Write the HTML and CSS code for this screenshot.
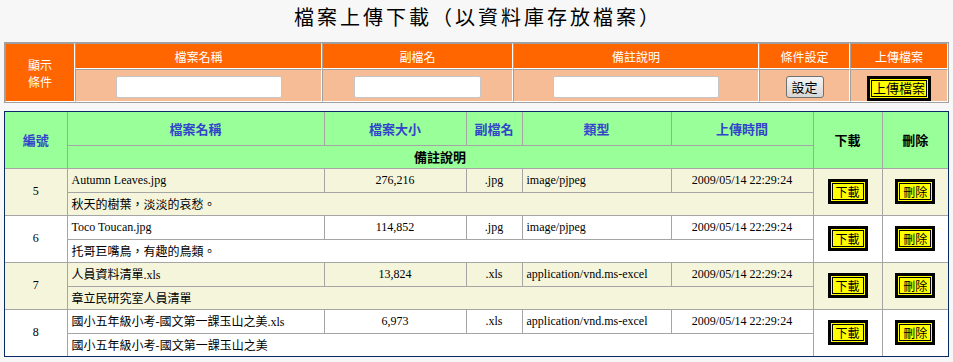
FILE: index.html
```html
<!DOCTYPE html>
<html>
<head>
    <meta charset="utf-8">
    <link rel="stylesheet" href="styles.css">
</head>

<body>
    <h1 class="pageTitle">檔案上傳下載（以資料庫存放檔案）</h1>

    <table class="filterTable">
        <colgroup>
            <col class="fc1">
            <col class="fc2">
            <col class="fc3">
            <col class="fc4">
            <col class="fc5">
            <col class="fc6">
        </colgroup>
        <tr>
            <th rowspan="2" class="showCond">顯示<br>條件</th>
            <th>檔案名稱</th>
            <th>副檔名</th>
            <th>備註說明</th>
            <th>條件設定</th>
            <th>上傳檔案</th>
        </tr>
        <tr>
            <td><input type="text" class="txtBox"></td>
            <td><input type="text" class="txtBox short"></td>
            <td><input type="text" class="txtBox"></td>
            <td><button type="button" class="setButton">設定</button></td>
            <td><button type="button" class="yellowButton wide">上傳檔案</button></td>
        </tr>
    </table>

    <div class="gridBox">
        <table class="fileGrid">
            <colgroup>
                <col class="gc1">
                <col class="gc2">
                <col class="gc3">
                <col class="gc4">
                <col class="gc5">
                <col class="gc6">
                <col class="gc7">
                <col class="gc8">
            </colgroup>
            <tr class="headRow1">
                <th rowspan="2" class="blue">編號</th>
                <th class="blue">檔案名稱</th>
                <th class="blue">檔案大小</th>
                <th class="blue">副檔名</th>
                <th class="blue">類型</th>
                <th class="blue">上傳時間</th>
                <th rowspan="2">下載</th>
                <th rowspan="2">刪除</th>
            </tr>
            <tr class="headRow2">
                <th colspan="5">備註說明</th>
            </tr>

            <tr class="fileRow odd">
                <td rowspan="2" class="center">5</td>
                <td class="left">Autumn Leaves.jpg</td>
                <td class="center">276,216</td>
                <td class="center">.jpg</td>
                <td class="left">image/pjpeg</td>
                <td class="center">2009/05/14 22:29:24</td>
                <td rowspan="2" class="center"><button type="button" class="yellowButton">下載</button></td>
                <td rowspan="2" class="center"><button type="button" class="yellowButton">刪除</button></td>
            </tr>
            <tr class="noteRow odd">
                <td colspan="5" class="left note">秋天的樹葉，淡淡的哀愁。</td>
            </tr>

            <tr class="fileRow">
                <td rowspan="2" class="center">6</td>
                <td class="left">Toco Toucan.jpg</td>
                <td class="center">114,852</td>
                <td class="center">.jpg</td>
                <td class="left">image/pjpeg</td>
                <td class="center">2009/05/14 22:29:24</td>
                <td rowspan="2" class="center"><button type="button" class="yellowButton">下載</button></td>
                <td rowspan="2" class="center"><button type="button" class="yellowButton">刪除</button></td>
            </tr>
            <tr class="noteRow">
                <td colspan="5" class="left note">托哥巨嘴鳥，有趣的鳥類。</td>
            </tr>

            <tr class="fileRow odd">
                <td rowspan="2" class="center">7</td>
                <td class="left">人員資料清單.xls</td>
                <td class="center">13,824</td>
                <td class="center">.xls</td>
                <td class="left">application/vnd.ms-excel</td>
                <td class="center">2009/05/14 22:29:24</td>
                <td rowspan="2" class="center"><button type="button" class="yellowButton">下載</button></td>
                <td rowspan="2" class="center"><button type="button" class="yellowButton">刪除</button></td>
            </tr>
            <tr class="noteRow odd">
                <td colspan="5" class="left note">章立民研究室人員清單</td>
            </tr>

            <tr class="fileRow">
                <td rowspan="2" class="center">8</td>
                <td class="left">國小五年級小考-國文第一課玉山之美.xls</td>
                <td class="center">6,973</td>
                <td class="center">.xls</td>
                <td class="left">application/vnd.ms-excel</td>
                <td class="center">2009/05/14 22:29:24</td>
                <td rowspan="2" class="center"><button type="button" class="yellowButton">下載</button></td>
                <td rowspan="2" class="center"><button type="button" class="yellowButton">刪除</button></td>
            </tr>
            <tr class="noteRow">
                <td colspan="5" class="left note">國小五年級小考-國文第一課玉山之美</td>
            </tr>
        </table>
    </div>
</body>
</html>
```

FILE: styles.css
```css
body {
    margin: 0 4px;
    background-color: #f7f7f7;
    font-family: "Noto Sans CJK TC", sans-serif;
}

.pageTitle {
    margin: 0 0 9px 0;
    padding-left: 3px;
    font-size: 20px;
    font-weight: normal;
    line-height: 33px;
    letter-spacing: 3px;
    text-align: center;
    color: #000;
}

/* query / upload bar */
.filterTable {
    width: 100%;
    table-layout: fixed;
    border-collapse: separate;
    border-spacing: 0;
    border: 1px solid #a0a0a0;
    margin-bottom: 8px;
}

.fc1 { width: 70px; }
.fc2 { width: 247px; }
.fc3 { width: 191px; }
.fc4 { width: 246px; }
.fc5 { width: 91px; }
.fc6 { width: 98px; }

.filterTable th,
.filterTable td {
    border: 1px solid;
    border-color: #a0a0a0 #ffffff #ffffff #a0a0a0;
    padding: 0;
    text-align: center;
}

.filterTable th {
    height: 24px;
    background-color: #ff6600;
    color: #ffffff;
    font-size: 12px;
    font-weight: normal;
}

.filterTable th.showCond {
    line-height: 17px;
}

.filterTable td {
    height: 31px;
    background-color: #f5bc96;
}

.txtBox {
    box-sizing: border-box;
    width: 166px;
    height: 22px;
    margin: 0;
    padding: 0 2px;
    border: 1px solid #c6c6c6;
    border-radius: 2px;
    background-color: #ffffff;
    vertical-align: middle;
}

.txtBox.short {
    width: 127px;
}

.setButton {
    box-sizing: border-box;
    width: 38px;
    height: 22px;
    padding: 0;
    border: 1px solid #707070;
    border-radius: 3px;
    background: linear-gradient(to bottom, #f4f4f4 0%, #e6e6e6 50%, #d6d6d6 100%);
    font-family: "Noto Sans CJK TC", sans-serif;
    font-size: 13px;
    line-height: 18px;
    color: #000;
    vertical-align: middle;
}

.yellowButton {
    box-sizing: border-box;
    width: 32px;
    height: 17px;
    padding: 0;
    border: 1px solid #000;
    box-shadow: 0 0 0 1px #ffff00, 0 0 0 4px #000;
    background-color: #ffff00;
    font-family: "Noto Sans CJK TC", sans-serif;
    font-size: 12px;
    line-height: 14px;
    color: #000;
    vertical-align: middle;
}

.yellowButton.wide {
    width: 56px;
    font-size: 13px;
}

/* file list */
.gridBox {
    border: 1px solid #0a2a66;
    background-color: #ffffff;
}

.fileGrid {
    width: 100%;
    table-layout: fixed;
    border-collapse: collapse;
    border-style: hidden;
    font-family: "Liberation Serif", "Noto Sans CJK TC", serif;
    font-size: 12px;
    color: #000;
}

.gc1 { width: 62px; }
.gc2 { width: 257px; }
.gc3 { width: 142px; }
.gc4 { width: 56px; }
.gc5 { width: 149px; }
.gc6 { width: 142px; }
.gc7 { width: 69px; }
.gc8 { width: 66px; }

.fileGrid th,
.fileGrid td {
    border: 1px solid #a5a5a5;
    padding: 0;
    white-space: nowrap;
    overflow: visible;
}

.fileGrid th {
    background-color: #99ff99;
    font-family: "Noto Sans CJK TC", sans-serif;
    font-size: 13px;
    font-weight: bold;
    text-align: center;
    color: #000;
}

.fileGrid th.blue {
    color: #3344cc;
}

.headRow1 { height: 33px; }
.headRow2 { height: 23px; }
.fileRow { height: 24px; }
.noteRow { height: 23px; }

.fileGrid tr.odd td {
    background-color: #f5f5dc;
}

.fileGrid td.center {
    text-align: center;
}

.fileGrid td.left {
    padding-left: 4px;
    text-align: left;
}

.fileGrid td.note {
    font-family: "Noto Sans CJK TC", sans-serif;
}
```
